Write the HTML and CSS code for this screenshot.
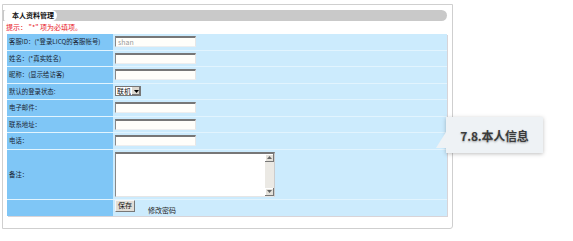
FILE: index.html
```html
<!DOCTYPE html>
<html lang="zh">
<head>
<meta charset="utf-8">
<title>本人资料管理</title>
<link rel="stylesheet" href="styles.css">
</head>
<body>
<div class="frame">
  <div class="titlebar"><span class="tab">本人资料管理</span></div>
  <div class="hint">提示： "*" 项为必填项。</div>
  <div class="form">
    <div class="lbl">客服ID：(*登录LICQ的客服帐号)</div>
    <div class="val"><span class="input ph">shan</span></div>
    <div class="lbl">姓名：(*真实姓名)</div>
    <div class="val"><span class="input"></span></div>
    <div class="lbl">昵称：(显示给访客)</div>
    <div class="val"><span class="input"></span></div>
    <div class="lbl">默认的登录状态:</div>
    <div class="val"><span class="select"><span class="sel-text">联机</span><span class="sel-btn"><svg width="5" height="3" viewBox="0 0 5 3"><path d="M0 0H5L2.5 3Z" fill="#000"/></svg></span></span></div>
    <div class="lbl">电子邮件：</div>
    <div class="val"><span class="input"></span></div>
    <div class="lbl">联系地址：</div>
    <div class="val"><span class="input"></span></div>
    <div class="lbl">电话：</div>
    <div class="val"><span class="input"></span></div>
    <div class="lbl">备注：</div>
    <div class="val"><div class="textarea"><div class="scroll"><span class="sb-btn"><svg width="5" height="3" viewBox="0 0 5 3"><path d="M0 3H5L2.5 0Z" fill="#666"/></svg></span><span class="sb-btn"><svg width="5" height="3" viewBox="0 0 5 3"><path d="M0 0H5L2.5 3Z" fill="#666"/></svg></span></div></div></div>
    <div class="lbl"></div>
    <div class="val save"><span class="btn">保存</span><span class="link">修改密码</span></div>
  </div>
</div>
<div class="callout"><span class="callout-text">7.8.本人信息</span><span class="pointer"></span></div>
</body>
</html>
```
FILE: styles.css
```css
html, body { margin: 0; padding: 0; background: #fff; }
body {
  width: 573px; height: 241px; position: relative; overflow: hidden;
  font-family: "Noto Sans CJK SC", "Noto Sans", sans-serif;
}
.frame {
  margin: 4px 0 0 2px;
  width: 449px;
  height: 223px;
  border: 1px solid #cfcfcf;
  border-radius: 0 0 3px 0;
  box-sizing: content-box;
}
.titlebar {
  margin: 5px 5px 0 0;
  height: 11px;
  background: #c9c9c9;
  border-radius: 0 6px 6px 0;
  display: flex;
  padding-left: 1px;
}
.tab {
  width: 53px;
  height: 11px;
  background: #fff;
  border-radius: 2px 6px 6px 2px;
  font-size: 7px;
  font-weight: bold;
  line-height: 11px;
  color: #111;
  padding-left: 8px;
  box-sizing: border-box;
}
.hint {
  height: 13px;
  line-height: 13px;
  font-size: 7px;
  color: #e8141c;
  padding-left: 3px;
}
.form {
  margin-left: 4px;
  width: 440px;
  display: grid;
  grid-template-columns: 106px 1fr;
  grid-template-rows: repeat(7, 15.5px) 49px 16px;
  row-gap: 1px;
  background: #e2f4fe;
  box-shadow: 1px 1px 0 #d8d4d8;
}
.lbl {
  background: #7fc6f6;
  font-size: 6.4px;
  color: #1a2533;
  display: flex;
  align-items: center;
  padding-left: 2px;
}
.val {
  background: #ccebfd;
  display: flex;
  align-items: center;
  padding-left: 2px;
}
.input {
  width: 81px;
  height: 11px;
  box-sizing: border-box;
  background: #fffefa;
  border-top: 2px solid #777;
  border-left: 1px solid #888;
  border-right: 1px solid #e6e6e6;
  border-bottom: 1px solid #eee;
  font-size: 7px;
  line-height: 8px;
  padding-left: 2px;
}
.ph { color: #9a9a9a; }
.select {
  display: flex;
  width: 26px;
  height: 10px;
  box-sizing: border-box;
  border: 1px solid #777;
  background: #fff;
}
.sel-text { flex: 1; font-size: 7px; line-height: 8px; color: #111; padding-left: 1px; }
.sel-btn {
  width: 8px;
  background: #dcd8d0;
  border-left: 1px solid #fff;
  display: flex; align-items: center; justify-content: center;
  box-shadow: inset -1px -1px 0 #777;
}
.textarea {
  width: 160px;
  height: 45px;
  box-sizing: border-box;
  background: #fff;
  border-top: 2px solid #777;
  border-left: 1px solid #888;
  border-right: 1px solid #ccc;
  border-bottom: 1px solid #e6e6e6;
  display: flex;
  justify-content: flex-end;
}
.scroll {
  width: 9px;
  background: #ebe9e4;
  display: flex;
  flex-direction: column;
  justify-content: space-between;
}
.sb-btn {
  height: 8px;
  background: #e4e1da;
  box-shadow: inset -1px -1px 0 #777, inset 1px 1px 0 #fff;
  display: flex; align-items: center; justify-content: center;
}
.save { align-items: center; }
.btn {
  width: 20px;
  height: 12px;
  box-sizing: border-box;
  background: #e2ddd6;
  border-top: 1px solid #f6f6f6;
  border-left: 1px solid #f6f6f6;
  border-right: 1px solid #777;
  border-bottom: 1px solid #777;
  font-size: 7px;
  line-height: 9px;
  text-align: center;
  color: #111;
  margin-top: -3px;
}
.link {
  font-size: 7px;
  color: #222;
  margin-left: 13px;
  margin-top: 4px;
}
.callout {
  position: absolute;
  left: 446px;
  top: 117px;
  width: 97px;
  height: 36px;
  background: #eef2f5;
  box-shadow: 0 1px 4px rgba(0,0,0,0.25);
  display: flex;
  align-items: center;
  justify-content: center;
}
.callout-text {
  font-size: 12px;
  font-weight: bold;
  color: #3c3c3c;
  text-shadow: 0 1px 2px rgba(0,0,0,0.35);
  letter-spacing: -0.2px;
}
.pointer {
  position: absolute;
  left: -10px;
  top: 15px;
  width: 10px;
  height: 16px;
  background: #eef2f5;
  clip-path: polygon(100% 0, 100% 100%, 0 100%);
}
```
